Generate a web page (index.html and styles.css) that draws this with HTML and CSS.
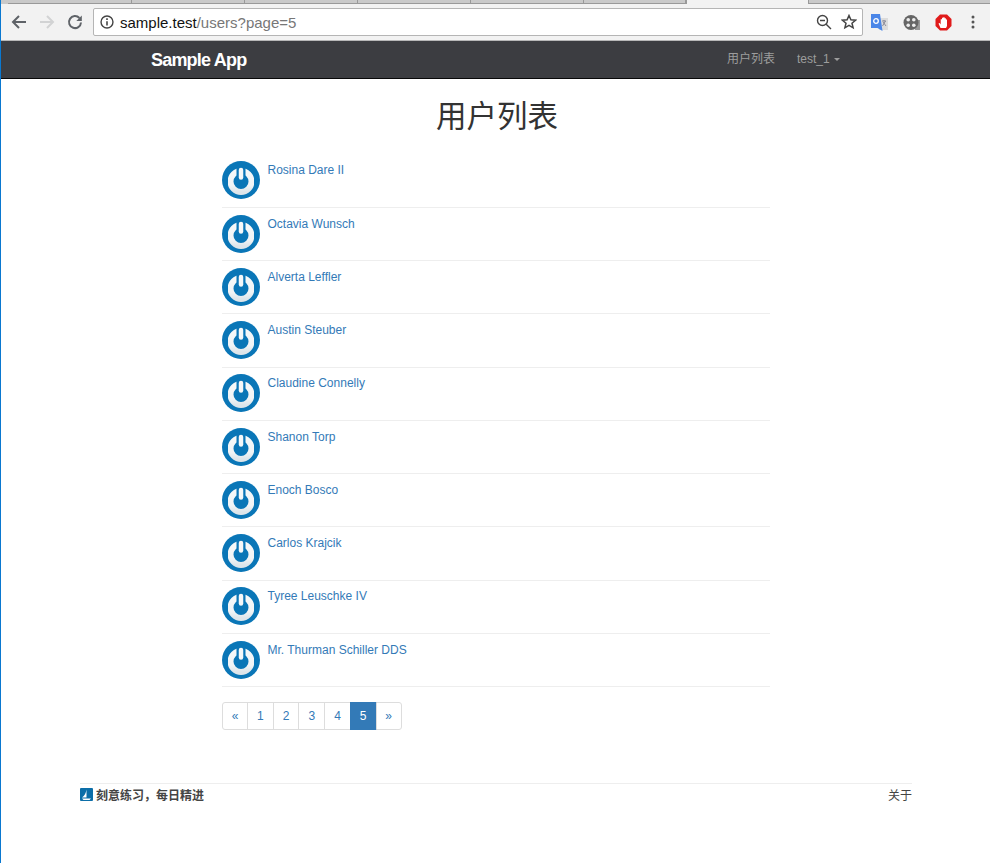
FILE: index.html
```html
<!DOCTYPE html>
<html>
<head>
    <title>用户列表</title>
    <link rel="stylesheet" href="styles.css">
</head>
<body>
    <div class="chrome">
        <div class="tabs">
            <div class="tab"></div>
            <div class="tab"></div>
            <div class="tab"></div>
            <div class="tab"></div>
            <div class="tab"></div>
            <div class="tab tab-short"></div>
            <div class="tab tab-active"></div>
            <div class="tab tab-last"></div>
        </div>
        <div class="toolbar">
            <svg class="tool-btn" width="18" height="18" viewBox="0 0 18 18"><path d="M16 9H3.500M9 3L3 9l6 6" fill="none" stroke="#5f6368" stroke-width="2"/></svg>
            <svg class="tool-btn" width="18" height="18" viewBox="0 0 18 18"><path d="M2 9h12.500M9 3l6 6-6 6" fill="none" stroke="#d2d3d4" stroke-width="2"/></svg>
            <svg class="tool-btn" width="18" height="18" viewBox="0 0 18 18"><path d="M13.400 5A6 6 0 1 0 15 9.500" fill="none" stroke="#5f6368" stroke-width="2"/><path d="M15.800 2.500v5.500h-5.500z" fill="#5f6368"/></svg>
            <div class="address">
                <svg width="14" height="14" viewBox="0 0 15 15"><circle cx="7.500" cy="7.500" r="6.400" fill="none" stroke="#444" stroke-width="1.500"/><path d="M7.500 6.600v4.600M7.500 3.600v1.800" stroke="#444" stroke-width="1.700"/></svg>
                <span class="url">sample.test<span class="url-path">/users?page=5</span></span>
                <svg class="zoom-icon" width="16" height="16" viewBox="0 0 16 16"><circle cx="6.500" cy="6.500" r="5" fill="none" stroke="#444" stroke-width="1.400"/><path d="M10.200 10.200L15 15M4 6.500h5" stroke="#444" stroke-width="1.400"/></svg>
                <svg width="16" height="16" viewBox="0 0 16 16"><path d="M8 1.500l1.900 4.300 4.600.4-3.500 3 1.100 4.600L8 11.400l-4.100 2.400L5 9.200l-3.500-3 4.600-.4z" fill="none" stroke="#444" stroke-width="1.500"/></svg>
            </div>
            <svg class="ext" width="17" height="17" viewBox="0 0 17 17"><path d="M8 4h9v12H8z" fill="#dcdcdc"/><path d="M11 7h4M13 6v1M11.500 12l3-5M12 8l3 4" stroke="#778" stroke-width=".8" fill="none"/><path d="M0 0h9l2.500 17-5-3H0z" fill="#4a86e8"/><circle cx="5" cy="7" r="2.300" fill="none" stroke="#fff" stroke-width="1.300"/></svg>
            <svg class="ext" width="17" height="17" viewBox="0 0 17 17"><path d="M12 6h5v10h-5z" fill="#999"/><circle cx="8" cy="8.500" r="7.500" fill="#666"/><circle cx="5.200" cy="5.700" r="1.800" fill="#eee"/><circle cx="10.800" cy="5.700" r="1.800" fill="#eee"/><circle cx="5.200" cy="11.300" r="1.800" fill="#eee"/><circle cx="10.800" cy="11.300" r="1.800" fill="#eee"/></svg>
            <svg class="ext" width="17" height="17" viewBox="0 0 17 17"><path d="M5 .5h7L16.500 5v7L12 16.500H5L.5 12V5z" fill="#e01b1b"/><path d="M5.500 14L3.500 9.500l1.200-.6 1 1.600V5.200h1.300V3.800h1.300v-.5h1.300v1h1.300v1.200h1.100V12l-1 2z" fill="#fff"/></svg>
            <svg class="menu-dots" width="4" height="14" viewBox="0 0 4 14"><circle cx="2" cy="2" r="1.500" fill="#555"/><circle cx="2" cy="7" r="1.500" fill="#555"/><circle cx="2" cy="12" r="1.500" fill="#555"/></svg>
        </div>
    </div>

    <nav class="navbar">
        <a class="brand" href="#">Sample App</a>
        <div class="nav-links">
            <a href="#">用户列表</a>
            <a href="#">test_1 <span class="caret"></span></a>
        </div>
    </nav>

    <div class="container">
        <h1>用户列表</h1>
        <ul class="users">
            <li><svg class="avatar" viewBox="0 0 38 38"><use href="#gravatar"/></svg><a href="#">Rosina Dare II</a></li>
            <li><svg class="avatar" viewBox="0 0 38 38"><use href="#gravatar"/></svg><a href="#">Octavia Wunsch</a></li>
            <li><svg class="avatar" viewBox="0 0 38 38"><use href="#gravatar"/></svg><a href="#">Alverta Leffler</a></li>
            <li><svg class="avatar" viewBox="0 0 38 38"><use href="#gravatar"/></svg><a href="#">Austin Steuber</a></li>
            <li><svg class="avatar" viewBox="0 0 38 38"><use href="#gravatar"/></svg><a href="#">Claudine Connelly</a></li>
            <li><svg class="avatar" viewBox="0 0 38 38"><use href="#gravatar"/></svg><a href="#">Shanon Torp</a></li>
            <li><svg class="avatar" viewBox="0 0 38 38"><use href="#gravatar"/></svg><a href="#">Enoch Bosco</a></li>
            <li><svg class="avatar" viewBox="0 0 38 38"><use href="#gravatar"/></svg><a href="#">Carlos Krajcik</a></li>
            <li><svg class="avatar" viewBox="0 0 38 38"><use href="#gravatar"/></svg><a href="#">Tyree Leuschke IV</a></li>
            <li><svg class="avatar" viewBox="0 0 38 38"><use href="#gravatar"/></svg><a href="#">Mr. Thurman Schiller DDS</a></li>
        </ul>
        <div class="pagination">
            <a href="#">«</a>
            <a href="#">1</a>
            <a href="#">2</a>
            <a href="#">3</a>
            <a href="#">4</a>
            <a class="active" href="#">5</a>
            <a href="#">»</a>
        </div>
    </div>

    <footer class="footer">
        <div class="footer-left">
            <svg width="13" height="13" viewBox="0 0 13 13"><rect width="13" height="13" rx="1" fill="#0c6ea8"/><path d="M6.500 1.500C6 5 4.500 8 2 9.500h4.500zM2 10.500h9l-1.500 1.500h-6z" fill="#fff"/></svg>
            <b>刻意练习，每日精进</b>
        </div>
        <a href="#">关于</a>
    </footer>

    <svg class="defs" width="0" height="0">
        <defs>
            <filter id="soft"><feGaussianBlur stdDeviation="0.4"/></filter>
            <linearGradient id="ringShade" x1="0" y1="0" x2="0" y2="1">
                <stop offset="0" stop-color="#f6f8f9"/>
                <stop offset="0.7" stop-color="#f1f4f6"/>
                <stop offset="1" stop-color="#dde5ea"/>
            </linearGradient>
            <symbol id="gravatar" viewBox="0 0 38 38">
                <circle cx="19" cy="19" r="19" fill="#0a76b7"/>
                <g filter="url(#soft)">
                    <circle cx="19" cy="20.500" r="10.500" fill="none" stroke="url(#ringShade)" stroke-width="6"/>
                    <path d="M14.500 6h9v9h-9z" fill="#0a76b7"/>
                    <path d="M19 9v7.500" stroke="#f6f8f9" stroke-width="4.500" stroke-linecap="round"/>
                </g>
            </symbol>
        </defs>
    </svg>
</body>
</html>
```

FILE: styles.css
```css
* {
    box-sizing: border-box;
}

body {
    margin: 0;
    min-height: 100vh;
    background-color: #fff;
    border-left: 1px solid #0a78d0;
    font-family: 'Liberation Sans', 'Noto Sans CJK SC', sans-serif;
    font-size: 12px;
    color: #333;
}

a {
    text-decoration: none;
}

/* 浏览器外框 */
.chrome {
    height: 41px;
    background-color: #f2f2f2;
    border-bottom: 1px solid #b8b8b8;
}

.tabs {
    display: flex;
    height: 4px;
    padding-left: 7px;
    background-color: #c9c9c9;
}

.tab {
    width: 113px;
    border-right: 1px solid #999;
    border-bottom: 1px solid #999;
}

.tab:first-child {
    width: 124px;
}

.tab-short {
    width: 102px;
}

.tab-active {
    width: 123px;
    background-color: #f2f2f2;
    border-bottom: none;
    border-left: 1px solid #999;
}

.tab-last {
    flex: 1;
    border-right: none;
}

.toolbar {
    display: flex;
    align-items: center;
    height: 36px;
    padding-left: 9px;
}

.tool-btn {
    margin-right: 10px;
}

.address {
    display: flex;
    align-items: center;
    width: 770px;
    height: 28px;
    margin-left: -1px;
    padding: 0 5px 0 6px;
    background-color: #fff;
    border: 1px solid #b5b5b5;
    border-radius: 2px;
}

.url {
    flex: 1;
    margin-left: 6px;
    font-size: 15px;
    color: #111;
}

.url-path {
    color: #777;
}

.zoom-icon {
    margin-right: 9px;
}

.ext {
    margin-left: 8px;
    margin-right: 7px;
}

.menu-dots {
    margin-left: 12px;
}

/* 顶部导航栏 */
.navbar {
    display: flex;
    align-items: center;
    justify-content: space-between;
    height: 38px;
    padding: 0 150px 0 150px;
    background-color: #3c3d41;
    border-bottom: 1px solid #080808;
}

.brand {
    padding-top: 2px;
    font-size: 18px;
    font-weight: bold;
    letter-spacing: -0.8px;
    color: #fff;
}

.nav-links {
    display: flex;
    align-items: center;
    gap: 22px;
}

.nav-links a {
    line-height: 17px;
    color: #9d9d9d;
}

.caret {
    display: inline-block;
    margin-left: 1px;
    vertical-align: middle;
    border-top: 3px solid #9d9d9d;
    border-left: 3px solid transparent;
    border-right: 3px solid transparent;
}

/* 用户列表 */
.container {
    width: 548px;
    margin-left: 221px;
}

h1 {
    margin: 15px 0 16.7px;
    padding-left: 2px;
    font-size: 30.5px;
    font-weight: normal;
    line-height: 44px;
    text-align: center;
}

.users {
    margin: 0;
    padding: 0;
    list-style: none;
}

.users li {
    display: flex;
    align-items: flex-start;
    height: 53.25px;
    padding-top: 6.7px;
    border-bottom: 1px solid #eee;
}

.users a {
    margin: 2px 0 0 7.5px;
    color: #337ab7;
}

.avatar {
    width: 38px;
    height: 38px;
}

.defs {
    position: absolute;
}

/* 分页 */
.pagination {
    display: flex;
    width: max-content;
    margin-top: 15px;
}

.pagination a {
    height: 28px;
    margin-left: -1px;
    padding: 6px 9px 0;
    background-color: #fff;
    border: 1px solid #ddd;
    color: #337ab7;
}

.pagination a:first-child {
    margin-left: 0;
    padding: 6px 8.7px 0;
    border-radius: 3px 0 0 3px;
}

.pagination a:last-child {
    padding: 6px 8.7px 0;
    border-radius: 0 3px 3px 0;
}

.pagination .active {
    background-color: #337ab7;
    border-color: #337ab7;
    color: #fff;
}

/* 页脚 */
.footer {
    display: flex;
    justify-content: space-between;
    width: 832px;
    margin: 53px 0 0 79px;
    padding-top: 2px;
    border-top: 1px solid #eee;
}

.footer-left {
    display: flex;
    align-items: center;
    gap: 3px;
    color: #444;
}

.footer a {
    color: #444;
}
```
